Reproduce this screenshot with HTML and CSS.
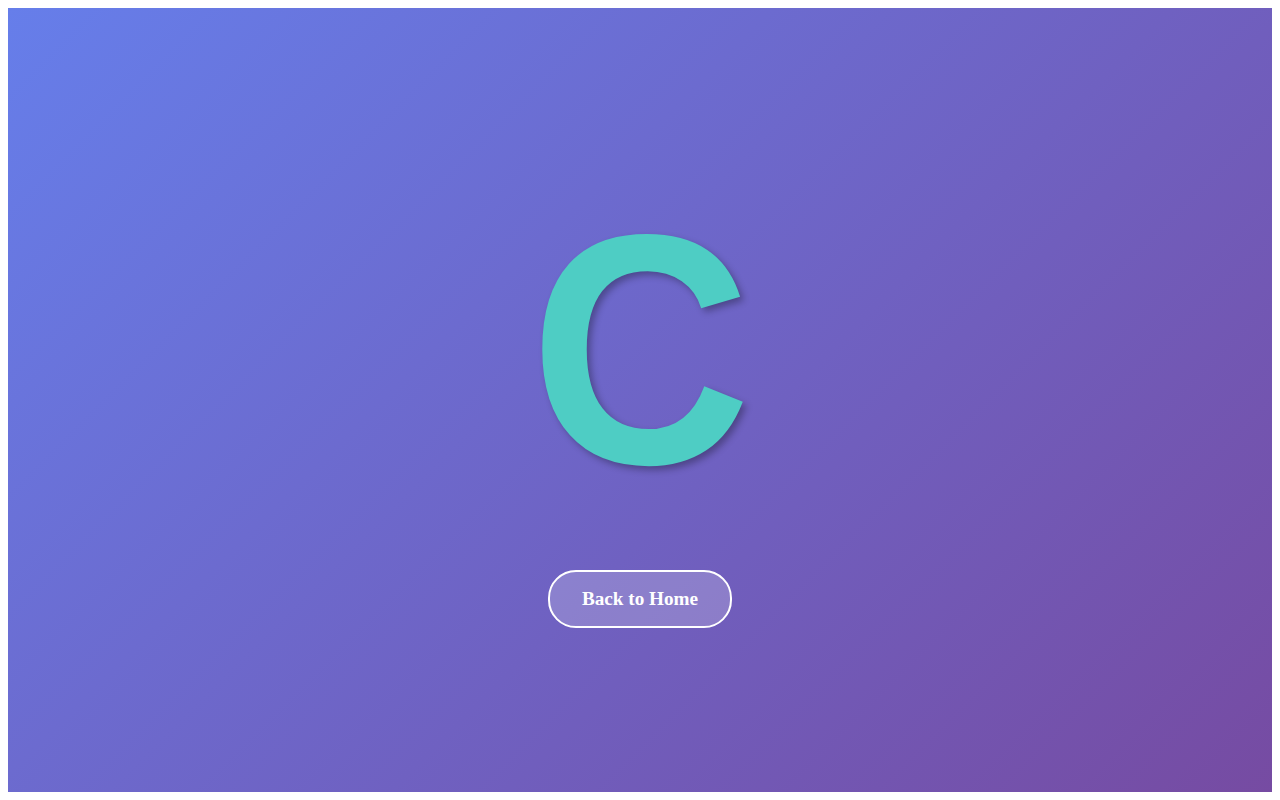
FILE: index.html
```html
<!DOCTYPE html>
<html lang="en">
<head>
<meta charset="utf-8">
<title>C</title>
<link rel="stylesheet" href="styles.css">
</head>
<body>
<div class="page">
  <h1 class="letter">C</h1>
  <a class="home-btn" href="#">Back to Home</a>
</div>
</body>
</html>
```

FILE: styles.css
```css
body {
  margin: 8px;
}
.page {
  height: calc(100vh - 16px);
  box-sizing: border-box;
  padding-bottom: 12px;
  background: linear-gradient(135deg, #667eea 0%, #764ba2 100%);
  display: flex;
  flex-direction: column;
  align-items: center;
  justify-content: center;
}
.letter {
  margin: 0;
  font-family: "Liberation Sans", Arial, sans-serif;
  font-weight: bold;
  font-size: 328px;
  color: #4ecdc4;
  text-shadow: 4px 4px 8px rgba(0, 0, 0, 0.3);
  transform: scaleX(0.935);
}
.home-btn {
  margin-top: 31px;
  font-family: "Liberation Serif", "Times New Roman", serif;
  font-weight: bold;
  font-size: 19.2px;
  color: #fff;
  text-decoration: none;
  padding: 16px 32px;
  border: 2px solid #fff;
  border-radius: 28px;
  background: rgba(255, 255, 255, 0.2);
}
```
